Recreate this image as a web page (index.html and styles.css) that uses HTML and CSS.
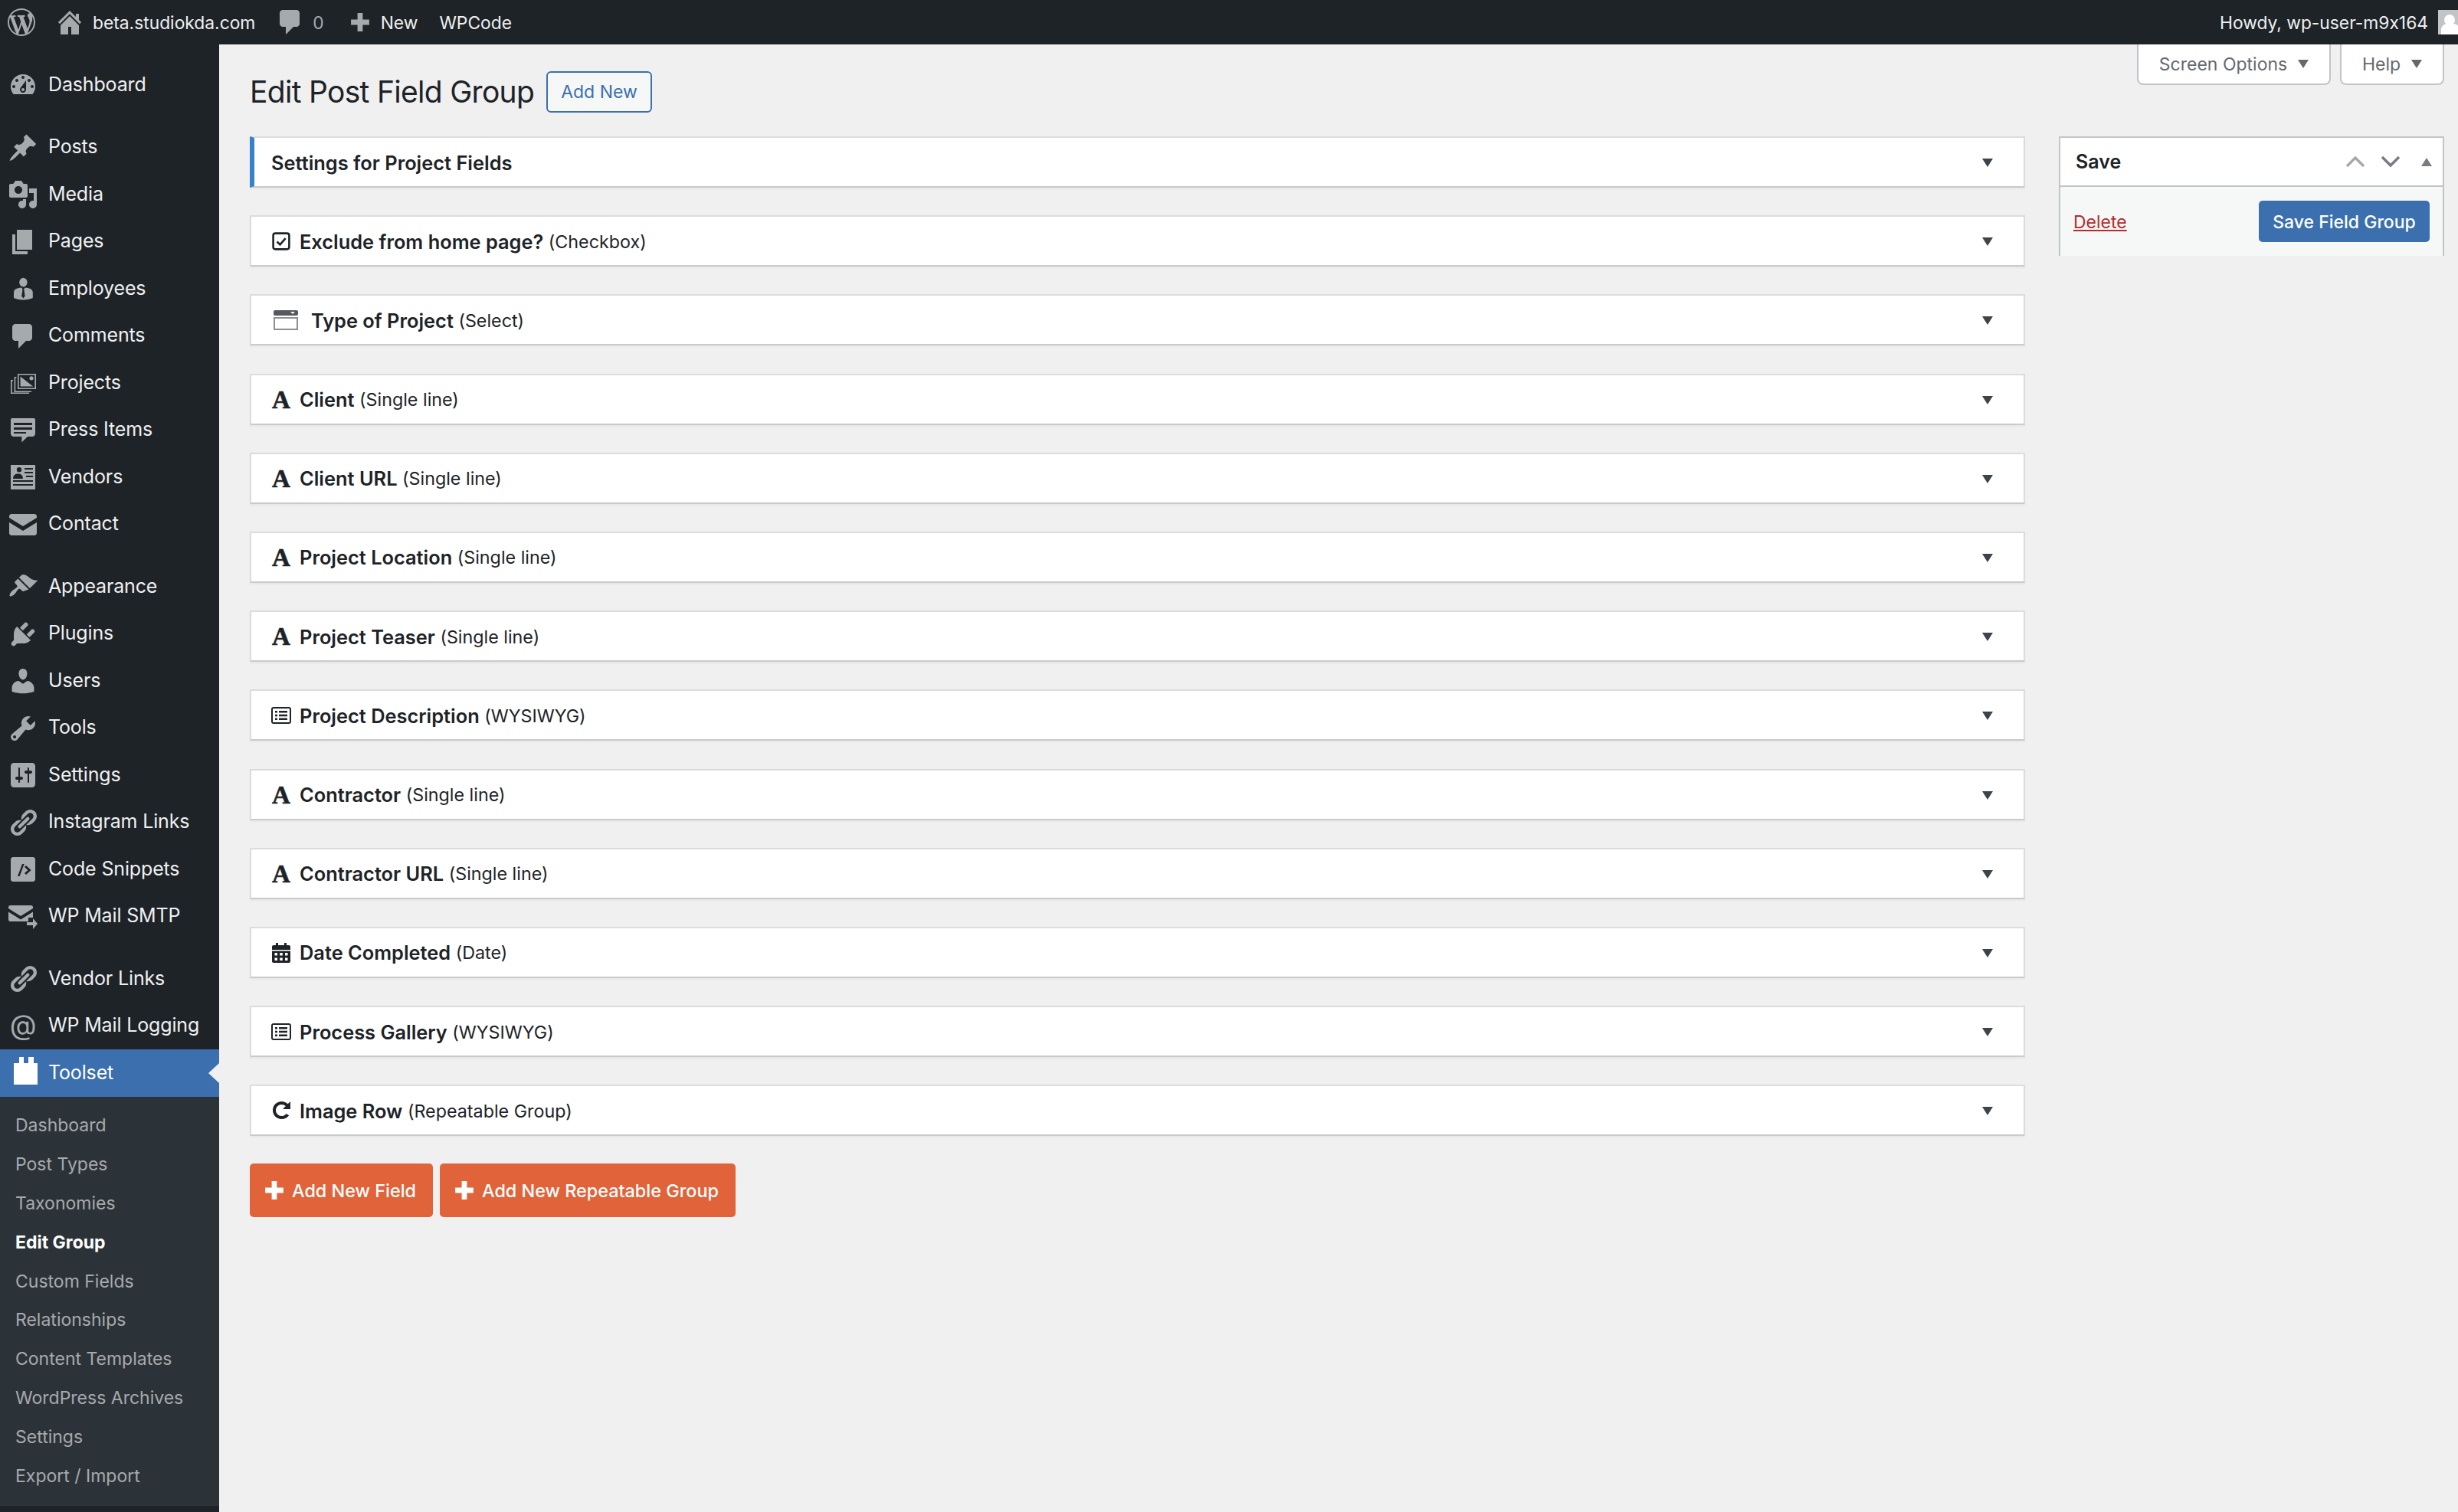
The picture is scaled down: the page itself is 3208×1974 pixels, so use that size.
FILE: index.html
```html
<!DOCTYPE html>
<html lang="en">
<head>
    <meta charset="UTF-8">
    <meta name="viewport" content="width=device-width, initial-scale=1.0">
    <title>Edit Post Field Group</title>
    <link rel="stylesheet" href="styles.css">
</head>
<body>
    <svg class="sprite" xmlns="http://www.w3.org/2000/svg">
        <symbol id="i-wp" viewBox="0 0 20 20"><path d="M20 10c0-5.51-4.49-10-10-10C4.48 0 0 4.49 0 10c0 5.52 4.48 10 10 10 5.51 0 10-4.48 10-10zM7.78 15.37L4.37 6.22c.55-.02 1.17-.08 1.17-.08.5-.06.44-1.13-.06-1.11 0 0-1.45.11-2.37.11-.18 0-.37 0-.58-.01C4.12 2.69 6.87 1.11 10 1.11c2.33 0 4.45.87 6.05 2.34-.68-.11-1.65.39-1.65 1.58 0 .74.45 1.36.9 2.1.35.61.55 1.36.55 2.46 0 1.49-1.4 5-1.4 5l-3.03-8.37c.54-.02.82-.17.82-.17.5-.05.44-1.25-.06-1.22 0 0-1.44.12-2.38.12-.87 0-2.33-.12-2.33-.12-.5-.03-.56 1.2-.06 1.22l.92.08 1.26 3.41zM17.41 10c.24-.64.74-1.87.43-4.25.7 1.29 1.05 2.71 1.05 4.25 0 3.29-1.73 6.24-4.4 7.78.97-2.59 1.94-5.2 2.92-7.78zM6.1 18.09C3.12 16.65 1.11 13.53 1.11 10c0-1.3.23-2.48.72-3.59C3.25 10.3 4.67 14.2 6.1 18.09zm4.03-6.63l2.58 6.98c-.86.29-1.76.45-2.71.45-.79 0-1.57-.11-2.29-.33.81-2.38 1.62-4.74 2.42-7.1z"/></symbol>
        <symbol id="i-home" viewBox="0 0 20 20"><path d="M16 8.5l1.53 1.53-1.06 1.06L10 4.62l-6.47 6.47-1.06-1.06L10 2.5l4 4v-2h2v4zm-6-2.46l6 5.99V18h-5v-5H9v5H4v-5.97z"/></symbol>
        <symbol id="i-comment" viewBox="0 0 20 20"><path d="M5 2h9c1.1 0 2 .9 2 2v7c0 1.1-.9 2-2 2h-2l-5 5v-5H5c-1.1 0-2-.9-2-2V4c0-1.1.9-2 2-2z"/></symbol>
        <symbol id="i-plus" viewBox="0 0 20 20"><path d="M17 8v4h-5v5H8v-5H3V8h5V3h4v5h5z"/></symbol>
        <symbol id="i-dashboard" viewBox="0 0 20 20"><path d="M3.76 16h12.48c1.1-1.37 1.76-3.11 1.76-5 0-4.42-3.58-8-8-8s-8 3.58-8 8c0 1.89.66 3.63 1.76 5zM10 4c.55 0 1 .45 1 1s-.45 1-1 1-1-.45-1-1 .45-1 1-1zM6 6c.55 0 1 .45 1 1s-.45 1-1 1-1-.45-1-1 .45-1 1-1zm8 0c.55 0 1 .45 1 1s-.45 1-1 1-1-.45-1-1 .45-1 1-1zm-5.37 5.55L12 7v6c0 1.1-.9 2-2 2s-2-.9-2-2c0-.57.24-1.08.63-1.45zM4 10c.55 0 1 .45 1 1s-.45 1-1 1-1-.45-1-1 .45-1 1-1zm12 0c.55 0 1 .45 1 1s-.45 1-1 1-1-.45-1-1 .45-1 1-1zm-5 3c0-.55-.45-1-1-1s-1 .45-1 1 .45 1 1 1 1-.45 1-1z"/></symbol>
        <symbol id="i-post" viewBox="0 0 20 20"><path d="M10.44 3.02l1.82-1.82 6.36 6.35-1.83 1.82c-1.05-.68-2.48-.57-3.41.36l-.75.75c-.92.93-1.04 2.35-.35 3.41l-1.83 1.82-2.41-2.41-2.8 2.79c-.42.42-3.38 2.71-3.8 2.29s1.86-3.39 2.28-3.81l2.79-2.79L4.1 9.36l1.83-1.82c1.05.69 2.48.57 3.4-.36l.75-.75c.93-.92 1.05-2.35.36-3.41z"/></symbol>
        <symbol id="i-media" viewBox="0 0 20 20"><path d="M13 11V4c0-.55-.45-1-1-1h-1.67L9 1H5L3.67 3H2c-.55 0-1 .45-1 1v7c0 .55.45 1 1 1h10c.55 0 1-.45 1-1zM7 4.5c1.38 0 2.5 1.12 2.5 2.5S8.38 9.5 7 9.5 4.5 8.38 4.5 7 5.62 4.5 7 4.5zM14 6h5v10.5c0 1.38-1.12 2.5-2.5 2.5S14 17.88 14 16.5s1.12-2.5 2.5-2.5c.17 0 .34.02.5.05V9h-3V6zm-4 8.05V13h2v3.5c0 1.38-1.12 2.5-2.5 2.5S7 17.88 7 16.5 8.12 14 9.5 14c.17 0 .34.02.5.05z"/></symbol>
        <symbol id="i-page" viewBox="0 0 20 20"><path d="M6 15V2h10v13H6zm-1 1h8v2H3V5h2v11z"/></symbol>
        <symbol id="i-employee" viewBox="0 0 20 20"><ellipse cx="10.200" cy="5.800" rx="2.600" ry="2.900"/><path fill-rule="evenodd" d="M4 12.500C4 10.500 6 9.400 8.500 9.400h3.400c2.500 0 4.500 1.100 4.500 3.100V16c-1.500.8-3.600 1.200-6.200 1.200S5.500 16.800 4 16zM9.400 9.400l.3 1.500-.6 3.900 1.100 1.500 1.100-1.500-.6-3.900.3-1.500z"/></symbol>
        <symbol id="i-projects" viewBox="0 0 20 20"><path fill-rule="evenodd" d="M6.500 4h12v10h-12zM7.300 4.800v8.400h10.400V4.800zM8.300 5.800l8.300 6.400H8.300zM15.500 5.600a1.300 1.300 0 1 1 0 2.600 1.300 1.300 0 0 1 0-2.600zM4.300 6h1.400v.8h-.6v8.400h10.400v.8H4.300zM2 8h1.500v.8h-.7v7.400h11.200v.8H2z"/></symbol>
        <symbol id="i-press" viewBox="0 0 20 20"><path fill-rule="evenodd" d="M3 2h14c.6 0 1 .4 1 1v9c0 1-.7 2-2 2h-3l-3.800 3.800V14H4c-1.300 0-2-1-2-2V3c0-.6.4-1 1-1zm1 3v1.500h12V5H4zm0 3v1.500h12V8H4zm0 3v1h8v-1H4z"/></symbol>
        <symbol id="i-vendor" viewBox="0 0 20 20"><path fill-rule="evenodd" d="M2 2h16v16H2V2zm5.500 1.500a1.600 1.600 0 1 0 0 3.200 1.600 1.600 0 0 0 0-3.200zM3.500 11h6.500c0-2-1-3.300-3.200-3.300S3.500 9 3.500 11zM11 4v1h5.500V4H11zm0 2.500v1h5.500v-1H11zm1 2.500v1h4.500V9H12zM3.500 12v1h13v-1h-13zm0 2.500v1h13v-1h-13z"/></symbol>
        <symbol id="i-mail" viewBox="0 0 20 20"><path d="M2.500 3h15c.8 0 1.500.7 1.500 1.500V5.500l-9 5.500-9-5.500v-1C1 3.700 1.700 3 2.500 3zM1 8.500l9 5.500 9-5.500V15.500c0 .8-.7 1.500-1.500 1.500h-15C1.700 17 1 16.300 1 15.500v-7z"/></symbol>
        <symbol id="i-brush" viewBox="0 0 20 20"><path d="M14.480 11.060L7.410 3.990l1.500-1.500c.5-.56 2.300-.47 3.510.32 1.210.8 1.430 1.280 2.910 2.100 1.180.64 2.450 1.260 4.450.85zm-.71.71L6.700 4.700 4.930 6.470c-.39.39-.39 1.020 0 1.410l1.060 1.060c.39.39.39 1.030 0 1.420-.6.6-1.430 1.110-2.210 1.690-.35.26-.7.53-1.010.84-1.340 1.340-1.810 2.750-1.350 3.210.47.46 1.850-.03 3.020-1.210.31-.31.58-.66.84-1.010.58-.78 1.090-1.610 1.690-2.210.39-.39 1.030-.39 1.420 0l1.060 1.060c.39.39 1.020.39 1.410 0z"/></symbol>
        <symbol id="i-plugin" viewBox="0 0 20 20"><path d="M13.110 4.360L9.870 7.600 8 5.730l3.240-3.240c.35-.34 1.050-.2 1.560.32.52.51.66 1.210.31 1.550zm-8 1.770l.91-1.120 9.010 9.010-1.190.84c-.71.71-2.630 1.160-3.820 1.160H6.140L4.900 17.260c-.59.59-1.540.59-2.120 0-.59-.58-.59-1.530 0-2.120l1.240-1.240v-3.880c0-1.130.4-3.190 1.090-3.890zm7.260 3.970l3.240-3.240c.34-.35 1.040-.21 1.550.31.52.51.66 1.210.31 1.550l-3.240 3.250z"/></symbol>
        <symbol id="i-users" viewBox="0 0 20 20"><path d="M10 9.250c-2.270 0-2.730-3.440-2.730-3.440C7 4.020 7.820 2 9.970 2c2.160 0 2.980 2.020 2.710 3.810 0 0-.41 3.440-2.680 3.440zm0 2.570L12.720 10c2.390 0 4.520 2.330 4.520 4.530v2.490s-3.650 1.130-7.240 1.130c-3.650 0-7.240-1.130-7.240-1.130v-2.490c0-2.250 1.940-4.480 4.470-4.480z"/></symbol>
        <symbol id="i-tools" viewBox="0 0 20 20"><path d="M16.680 9.770c-1.340 1.340-3.300 1.670-4.950.99l-5.410 6.520c-.99.99-2.590.99-3.580 0s-.99-2.590 0-3.570l6.520-5.420c-.68-1.650-.35-3.610.99-4.950 1.280-1.280 3.120-1.620 4.720-1.060l-2.890 2.890 2.820 2.820 2.860-2.870c.53 1.580.18 3.390-1.080 4.650zM3.810 16.210c.4.39 1.040.39 1.430 0 .4-.4.4-1.040 0-1.430-.39-.4-1.030-.4-1.430 0-.39.39-.39 1.030 0 1.430z"/></symbol>
        <symbol id="i-settings" viewBox="0 0 20 20"><path d="M18 16V4c0-1.100-.9-2-2-2H4c-1.100 0-2 .9-2 2v12c0 1.100.9 2 2 2h12c1.100 0 2-.9 2-2zM8 11h1c.55 0 1 .45 1 1s-.45 1-1 1H8v1.500c0 .28-.22.5-.5.5s-.5-.22-.5-.5V13H6c-.55 0-1-.45-1-1s.45-1 1-1h1V5.500c0-.28.22-.5.5-.5s.5.22.5.5V11zm5-2h-1c-.55 0-1-.45-1-1s.45-1 1-1h1V5.500c0-.28.22-.5.5-.5s.5.22.5.5V7h1c.55 0 1 .45 1 1s-.45 1-1 1h-1v5.500c0 .28-.22.5-.5.5s-.5-.22-.5-.5V9z"/></symbol>
        <symbol id="i-link" viewBox="0 0 20 20"><path d="M17.740 2.760c1.680 1.690 1.680 4.410 0 6.100l-1.530 1.520c-1.120 1.120-2.700 1.470-4.140 1.090l2.620-2.610.76-.77.76-.76c.84-.84.84-2.200 0-3.040-.84-.85-2.200-.85-3.040 0l-.77.76-3.380 3.380c-.37-1.440-.02-3.020 1.100-4.140l1.520-1.530c1.690-1.680 4.420-1.680 6.100 0zM8.590 13.430l5.340-5.340c.42-.42.42-1.100 0-1.520-.44-.43-1.130-.39-1.530 0l-5.330 5.340c-.42.42-.42 1.100 0 1.520.44.43 1.130.39 1.520 0zm-.76 2.290l4.140-4.150c.38 1.440.03 3.020-1.090 4.140l-1.520 1.530c-1.690 1.680-4.410 1.680-6.100 0-1.680-1.680-1.680-4.420 0-6.100l1.530-1.520c1.120-1.120 2.700-1.470 4.140-1.100l-4.140 4.150c-.85.84-.85 2.200 0 3.050.84.84 2.200.84 3.040 0z"/></symbol>
        <symbol id="i-code" viewBox="0 0 20 20"><path fill-rule="evenodd" d="M3.500 2h13c.8 0 1.500.7 1.500 1.500v13c0 .8-.7 1.500-1.500 1.500h-13c-.8 0-1.500-.7-1.500-1.500v-13C2 2.700 2.700 2 3.500 2zm6 4.500L6.500 14.500h1.300l3-8H9.500zm2.500 1l-1 1 2.200 2-2.200 2 1 1 3.300-3-3.300-3z"/></symbol>
        <symbol id="i-smtp" viewBox="0 0 20 20"><path d="M1.800 2.500h13.400c.8 0 1.300.6 1.300 1.300v.7L8.500 9.500.5 4.500v-.7c0-.7.6-1.300 1.300-1.300zM.5 6.800l8 5 8-5v3.700h-3v2.500H1.800C1.100 13 .5 12.400.5 11.700V6.800zM14.500 11v2.500h2V11l3 3.500-3 3.500v-2.500h-4v-2h2z"/></symbol>
        <symbol id="i-toolset" viewBox="0 0 31 36"><path d="M0 8h7V0h6v8h6V0h7v8h5v28H0z"/></symbol>
        <symbol id="i-checkbox" viewBox="0 0 22 24"><rect x="1.400" y="2.400" width="19.200" height="19.200" rx="2.600" fill="none" stroke="#1d2327" stroke-width="2.400"/><path d="M6 12.500l3.600 3.600L16.200 8.400" fill="none" stroke="#1d2327" stroke-width="2.400"/></symbol>
        <symbol id="i-list" viewBox="0 0 26 22"><path fill-rule="evenodd" d="M3 0h20c1.700 0 3 1.300 3 3v16c0 1.700-1.300 3-3 3H3c-1.700 0-3-1.300-3-3V3c0-1.700 1.300-3 3-3zm0 2c-.6 0-1 .4-1 1v16c0 .6.4 1 1 1h20c.6 0 1-.4 1-1V3c0-.6-.4-1-1-1H3zm2 3h3v2.500H5V5zm5 0h11v2.500H10V5zM5 9.800h3v2.500H5V9.800zm5 0h11v2.500H10V9.800zm-5 4.700h3V17H5v-2.500zm5 0h11V17H10v-2.500z"/></symbol>
        <symbol id="i-date" viewBox="0 0 24 26"><path fill-rule="evenodd" d="M5 0h3v3h8V0h3v3h3c1.100 0 2 .9 2 2v4H0V5c0-1.100.9-2 2-2h3V0zM0 10.500h24V24c0 1.100-.9 2-2 2H2c-1.100 0-2-.9-2-2V10.500zM3.500 13v3.500H7V13H3.500zm6.700 0v3.500h3.600V13h-3.600zm6.800 0v3.500h3.500V13H17zM3.500 19.500V23H7v-3.500H3.500zm6.700 0V23h3.600v-3.500h-3.600zm6.800 0V23h3.500v-3.500H17z"/></symbol>
        <symbol id="i-repeat" viewBox="0 0 26 26"><path d="M25 1v10h-10l3.800-3.800C17.400 5.800 15.500 5 13.500 5 9.400 5 6 8.400 6 12.500S9.400 20 13.500 20c2.500 0 4.700-1.200 6.100-3.100l3.600 2.300C21 22.200 17.500 24 13.500 24 7.100 24 2 18.900 2 12.500S7.100 1 13.500 1c3.200 0 6.100 1.300 8.200 3.300L25 1z"/></symbol>
    </svg>

    <header class="admin-bar">
        <div class="bar-left">
            <svg class="bar-logo"><use href="#i-wp"></use></svg>
            <span class="bar-item bar-site"><svg class="bar-icon"><use href="#i-home"></use></svg>beta.studiokda.com</span>
            <span class="bar-item bar-comments"><svg class="bar-icon"><use href="#i-comment"></use></svg><span class="bar-count">0</span></span>
            <span class="bar-item bar-new"><svg class="bar-plus"><use href="#i-plus"></use></svg>New</span>
            <span class="bar-item bar-code">WPCode</span>
        </div>
        <div class="bar-right">
            <span>Howdy, wp-user-m9x164</span>
            <span class="avatar"><span class="avatar-head"></span><span class="avatar-body"></span></span>
        </div>
    </header>

    <div class="wrap">
        <nav class="sidebar">
            <ul class="menu">
                <li class="menu-item"><svg class="menu-icon"><use href="#i-dashboard"></use></svg>Dashboard</li>
                <li class="menu-item group-start"><svg class="menu-icon"><use href="#i-post"></use></svg>Posts</li>
                <li class="menu-item"><svg class="menu-icon"><use href="#i-media"></use></svg>Media</li>
                <li class="menu-item"><svg class="menu-icon"><use href="#i-page"></use></svg>Pages</li>
                <li class="menu-item"><svg class="menu-icon"><use href="#i-employee"></use></svg>Employees</li>
                <li class="menu-item"><svg class="menu-icon"><use href="#i-comment"></use></svg>Comments</li>
                <li class="menu-item"><svg class="menu-icon"><use href="#i-projects"></use></svg>Projects</li>
                <li class="menu-item"><svg class="menu-icon"><use href="#i-press"></use></svg>Press Items</li>
                <li class="menu-item"><svg class="menu-icon"><use href="#i-vendor"></use></svg>Vendors</li>
                <li class="menu-item"><svg class="menu-icon"><use href="#i-mail"></use></svg>Contact</li>
                <li class="menu-item group-start"><svg class="menu-icon"><use href="#i-brush"></use></svg>Appearance</li>
                <li class="menu-item"><svg class="menu-icon"><use href="#i-plugin"></use></svg>Plugins</li>
                <li class="menu-item"><svg class="menu-icon"><use href="#i-users"></use></svg>Users</li>
                <li class="menu-item"><svg class="menu-icon"><use href="#i-tools"></use></svg>Tools</li>
                <li class="menu-item"><svg class="menu-icon"><use href="#i-settings"></use></svg>Settings</li>
                <li class="menu-item"><svg class="menu-icon"><use href="#i-link"></use></svg>Instagram Links</li>
                <li class="menu-item"><svg class="menu-icon"><use href="#i-code"></use></svg>Code Snippets</li>
                <li class="menu-item"><svg class="menu-icon"><use href="#i-smtp"></use></svg>WP Mail SMTP</li>
                <li class="menu-item group-start"><svg class="menu-icon"><use href="#i-link"></use></svg>Vendor Links</li>
                <li class="menu-item"><span class="menu-icon at-icon">@</span>WP Mail Logging</li>
                <li class="menu-item current"><svg class="menu-icon toolset-icon"><use href="#i-toolset"></use></svg>Toolset</li>
            </ul>
            <ul class="submenu">
                <li>Dashboard</li>
                <li>Post Types</li>
                <li>Taxonomies</li>
                <li class="active">Edit Group</li>
                <li>Custom Fields</li>
                <li>Relationships</li>
                <li>Content Templates</li>
                <li>WordPress Archives</li>
                <li>Settings</li>
                <li>Export / Import</li>
            </ul>
        </nav>

        <main class="content">
            <div class="screen-tabs">
                <div class="screen-tab tab-options">Screen Options<span class="caret small"></span></div>
                <div class="screen-tab tab-help">Help<span class="caret small"></span></div>
            </div>
            <div class="title-row">
                <h1>Edit Post Field Group</h1>
                <a class="add-new">Add New</a>
            </div>
            <div class="columns">
                <div class="fields">
                    <div class="panel panel-settings"><span class="panel-title"><b>Settings for Project Fields</b></span><span class="caret"></span></div>
                    <div class="panel"><span class="panel-title"><svg class="field-icon"><use href="#i-checkbox"></use></svg><b>Exclude from home page?</b> (Checkbox)</span><span class="caret"></span></div>
                    <div class="panel"><span class="panel-title"><span class="select-icon"><span class="select-head"></span><span class="select-box"></span></span><b>Type of Project</b> (Select)</span><span class="caret"></span></div>
                    <div class="panel"><span class="panel-title"><span class="field-icon font-icon">A</span><b>Client</b> (Single line)</span><span class="caret"></span></div>
                    <div class="panel"><span class="panel-title"><span class="field-icon font-icon">A</span><b>Client URL</b> (Single line)</span><span class="caret"></span></div>
                    <div class="panel"><span class="panel-title"><span class="field-icon font-icon">A</span><b>Project Location</b> (Single line)</span><span class="caret"></span></div>
                    <div class="panel"><span class="panel-title"><span class="field-icon font-icon">A</span><b>Project Teaser</b> (Single line)</span><span class="caret"></span></div>
                    <div class="panel"><span class="panel-title"><svg class="field-icon"><use href="#i-list"></use></svg><b>Project Description</b> (WYSIWYG)</span><span class="caret"></span></div>
                    <div class="panel"><span class="panel-title"><span class="field-icon font-icon">A</span><b>Contractor</b> (Single line)</span><span class="caret"></span></div>
                    <div class="panel"><span class="panel-title"><span class="field-icon font-icon">A</span><b>Contractor URL</b> (Single line)</span><span class="caret"></span></div>
                    <div class="panel"><span class="panel-title"><svg class="field-icon"><use href="#i-date"></use></svg><b>Date Completed</b> (Date)</span><span class="caret"></span></div>
                    <div class="panel"><span class="panel-title"><svg class="field-icon"><use href="#i-list"></use></svg><b>Process Gallery</b> (WYSIWYG)</span><span class="caret"></span></div>
                    <div class="panel"><span class="panel-title"><svg class="field-icon"><use href="#i-repeat"></use></svg><b>Image Row</b> (Repeatable Group)</span><span class="caret"></span></div>
                    <div class="add-buttons">
                        <a class="btn-add"><svg class="btn-plus"><use href="#i-plus"></use></svg>Add New Field</a>
                        <a class="btn-add"><svg class="btn-plus"><use href="#i-plus"></use></svg>Add New Repeatable Group</a>
                    </div>
                </div>
                <aside class="save-box">
                    <div class="save-head">
                        <b>Save</b>
                        <span class="save-controls">
                            <svg class="chevron up" viewBox="0 0 26 16"><path d="M2 14L13 3l11 11"/></svg>
                            <svg class="chevron" viewBox="0 0 26 16"><path d="M2 2l11 11L24 2"/></svg>
                            <span class="caret-up"></span>
                        </span>
                    </div>
                    <div class="save-foot">
                        <a class="delete">Delete</a>
                        <a class="btn-save">Save Field Group</a>
                    </div>
                </aside>
            </div>
        </main>
    </div>
</body>
</html>
```

FILE: styles.css
```css
* {
    box-sizing: border-box;
}

body {
    margin: 0;
    background: #f0f0f1;
    color: #1d2327;
    font-family: 'Inter', 'Liberation Sans', sans-serif;
    font-size: 25px;
    font-feature-settings: "calt" 0;
    min-height: 1974px;
    overflow: hidden;
}

ul {
    list-style: none;
    margin: 0;
    padding: 0;
}

.sprite {
    display: none;
}

/* top bar */
.admin-bar {
    height: 58px;
    background: #1d2327;
    color: #f0f0f1;
    display: flex;
    justify-content: space-between;
    align-items: center;
    font-size: 22.8px;
}

.bar-left {
    display: flex;
    align-items: center;
    padding-left: 10px;
}

.bar-logo {
    width: 36px;
    height: 36px;
    fill: #a7aaad;
    margin-right: 25px;
}

.bar-item {
    display: flex;
    align-items: center;
}

.bar-icon {
    width: 40px;
    height: 40px;
    fill: #a7aaad;
    margin-right: 10px;
}

.bar-plus {
    width: 34px;
    height: 34px;
    fill: #a7aaad;
    margin-right: 10px;
}

.bar-site {
    margin-right: 26px;
}

.bar-comments {
    margin-right: 30px;
}

.bar-count {
    color: #a7aaad;
    margin-left: -1px;
}

.bar-new {
    margin-right: 28px;
}

.bar-right {
    display: flex;
    align-items: center;
    gap: 13px;
}

.avatar {
    width: 26px;
    height: 32px;
    background: #c3c4c7;
    position: relative;
    overflow: hidden;
    display: block;
}

.avatar-head {
    position: absolute;
    left: 8px;
    top: 6px;
    width: 14px;
    height: 14px;
    border-radius: 50%;
    background: #fff;
}

.avatar-body {
    position: absolute;
    left: 4px;
    top: 18px;
    width: 24px;
    height: 20px;
    border-radius: 8px 8px 0 0;
    background: #fff;
}

.wrap {
    display: flex;
    min-height: 1916px;
}

/* left menu */
.sidebar {
    width: 286px;
    flex: none;
    background: #1d2327;
    padding-top: 22px;
    color: #f0f0f1;
}

.menu-item {
    height: 61.5px;
    display: flex;
    align-items: center;
    padding: 0 0 2px 63px;
    position: relative;
    letter-spacing: -0.15px;
}

.group-start {
    margin-top: 20px;
}

.menu-icon {
    position: absolute;
    left: 10px;
    top: 11px;
    width: 40px;
    height: 40px;
    fill: #a7aaad;
}

.at-icon {
    color: #a7aaad;
    font-size: 36px;
    line-height: 36px;
    text-align: center;
}

.current {
    background: #3b6fae;
    color: #fff;
}

.current::after {
    content: '';
    position: absolute;
    right: 0;
    top: 18px;
    border: 13px solid transparent;
    border-right: 14px solid #f0f0f1;
    border-left-width: 0;
}

.toolset-icon {
    left: 18px;
    top: 10px;
    width: 31px;
    height: 36px;
    fill: #fff;
}

.submenu {
    background: #2c3338;
    padding: 12.5px 0 13.5px;
    font-size: 23px;
    color: #a7aaad;
}

.submenu li {
    height: 50.9px;
    line-height: 50.9px;
    padding-left: 20px;
}

.submenu .active {
    color: #fff;
    font-weight: 700;
}

/* main area */
.content {
    flex: 1;
    padding: 0 18px 0 40px;
}

.screen-tabs {
    float: right;
    display: flex;
    gap: 12px;
}

.screen-tab {
    height: 53px;
    background: #fff;
    border: 2px solid #c3c4c7;
    border-top: none;
    border-radius: 0 0 8px 8px;
    color: #646970;
    font-size: 23px;
    display: flex;
    align-items: center;
    justify-content: center;
}

.tab-options {
    width: 253px;
}

.tab-help {
    width: 136px;
}

.title-row {
    display: flex;
    align-items: center;
    padding-top: 35px;
    gap: 16px;
}

h1 {
    margin: 0;
    font-size: 39px;
    font-weight: 400;
    letter-spacing: -0.7px;
    line-height: 54px;
}

.add-new {
    height: 54px;
    padding: 0 17px;
    border: 2px solid #3b6fae;
    border-radius: 6px;
    background: #f6f7f7;
    color: #3b6fae;
    font-size: 23px;
    line-height: 50px;
}

.columns {
    display: flex;
    gap: 44px;
    margin-top: 31px;
}

.fields {
    flex: 1;
}

.panel {
    height: 67px;
    margin-bottom: 36.2px;
    background: #fff;
    border: 2px solid #dcdcde;
    border-bottom-color: #c9cace;
    box-shadow: 0 2px 2px rgba(0, 0, 0, 0.04);
    display: flex;
    align-items: center;
    justify-content: space-between;
    padding: 1px 40px 0 26px;
    font-size: 23.3px;
}

.panel b {
    font-weight: 600;
    font-size: 25.4px;
}

.panel-settings {
    border-left: 6px solid #3582c4;
    padding-left: 22px;
}

.panel-title {
    display: flex;
    align-items: center;
    white-space: pre;
}

.field-icon {
    width: 26px;
    height: 26px;
    fill: #1d2327;
    margin-right: 11px;
    flex: none;
}

.font-icon {
    font-family: 'Liberation Serif', serif;
    font-weight: 700;
    font-size: 33px;
    line-height: 26px;
    -webkit-text-stroke: 0.6px #1d2327;
    display: flex;
    justify-content: center;
}

.select-icon {
    width: 32px;
    height: 26px;
    margin: 0 17px 0 3px;
    display: flex;
    flex-direction: column;
    gap: 2px;
}

.select-head {
    height: 7px;
    background: #55585c;
    border-radius: 2px;
    display: flex;
    justify-content: flex-end;
    align-items: center;
    padding-right: 4px;
}

.select-head::after {
    content: '';
    border-left: 3px solid transparent;
    border-right: 3px solid transparent;
    border-top: 3px solid #fff;
}

.select-box {
    flex: 1;
    border: 2px solid #8c8f94;
    background: #fff;
}

.caret {
    width: 0;
    height: 0;
    border-left: 7.5px solid transparent;
    border-right: 7.5px solid transparent;
    border-top: 11px solid #3c434a;
}

.panel .caret {
    margin-top: 1px;
}

.caret.small {
    margin-left: 14px;
    border-top-color: #646970;
}

.add-buttons {
    display: flex;
    gap: 9px;
}

.btn-add {
    height: 70px;
    background: #e0633a;
    color: #fff;
    border-radius: 5px;
    padding: 0 22px 0 15px;
    display: flex;
    align-items: center;
    font-size: 23.4px;
    font-weight: 500;
}

.btn-plus {
    width: 34px;
    height: 34px;
    fill: #fff;
    margin-right: 6px;
}

.save-box {
    width: 503px;
    height: 156px;
    flex: none;
    border: 2px solid #c3c4c7;
    background: #fff;
}

.save-head {
    height: 64px;
    border-bottom: 2px solid #c3c4c7;
    display: flex;
    align-items: center;
    justify-content: space-between;
    padding: 0 14px 0 20px;
}

.save-head b {
    font-weight: 600;
    font-size: 25px;
}

.save-controls {
    display: flex;
    align-items: center;
    gap: 20px;
}

.chevron {
    width: 26px;
    height: 16px;
    fill: none;
    stroke: #787c82;
    stroke-width: 3.5;
}

.chevron.up {
    stroke: #a7aaad;
}

.caret-up {
    width: 0;
    height: 0;
    border-left: 7.5px solid transparent;
    border-right: 7.5px solid transparent;
    border-bottom: 11px solid #787c82;
    margin-left: 7px;
}

.save-foot {
    height: 90px;
    background: #f6f7f7;
    display: flex;
    align-items: center;
    justify-content: space-between;
    padding: 0 17px;
}

.delete {
    color: #b32d2e;
    text-decoration: underline;
    font-size: 23px;
    padding-top: 1px;
}

.btn-save {
    width: 223px;
    height: 54px;
    padding-top: 1px;
    background: #3b6fae;
    color: #fff;
    border-radius: 5px;
    font-size: 23px;
    font-weight: 500;
    display: flex;
    align-items: center;
    justify-content: center;
}
```
